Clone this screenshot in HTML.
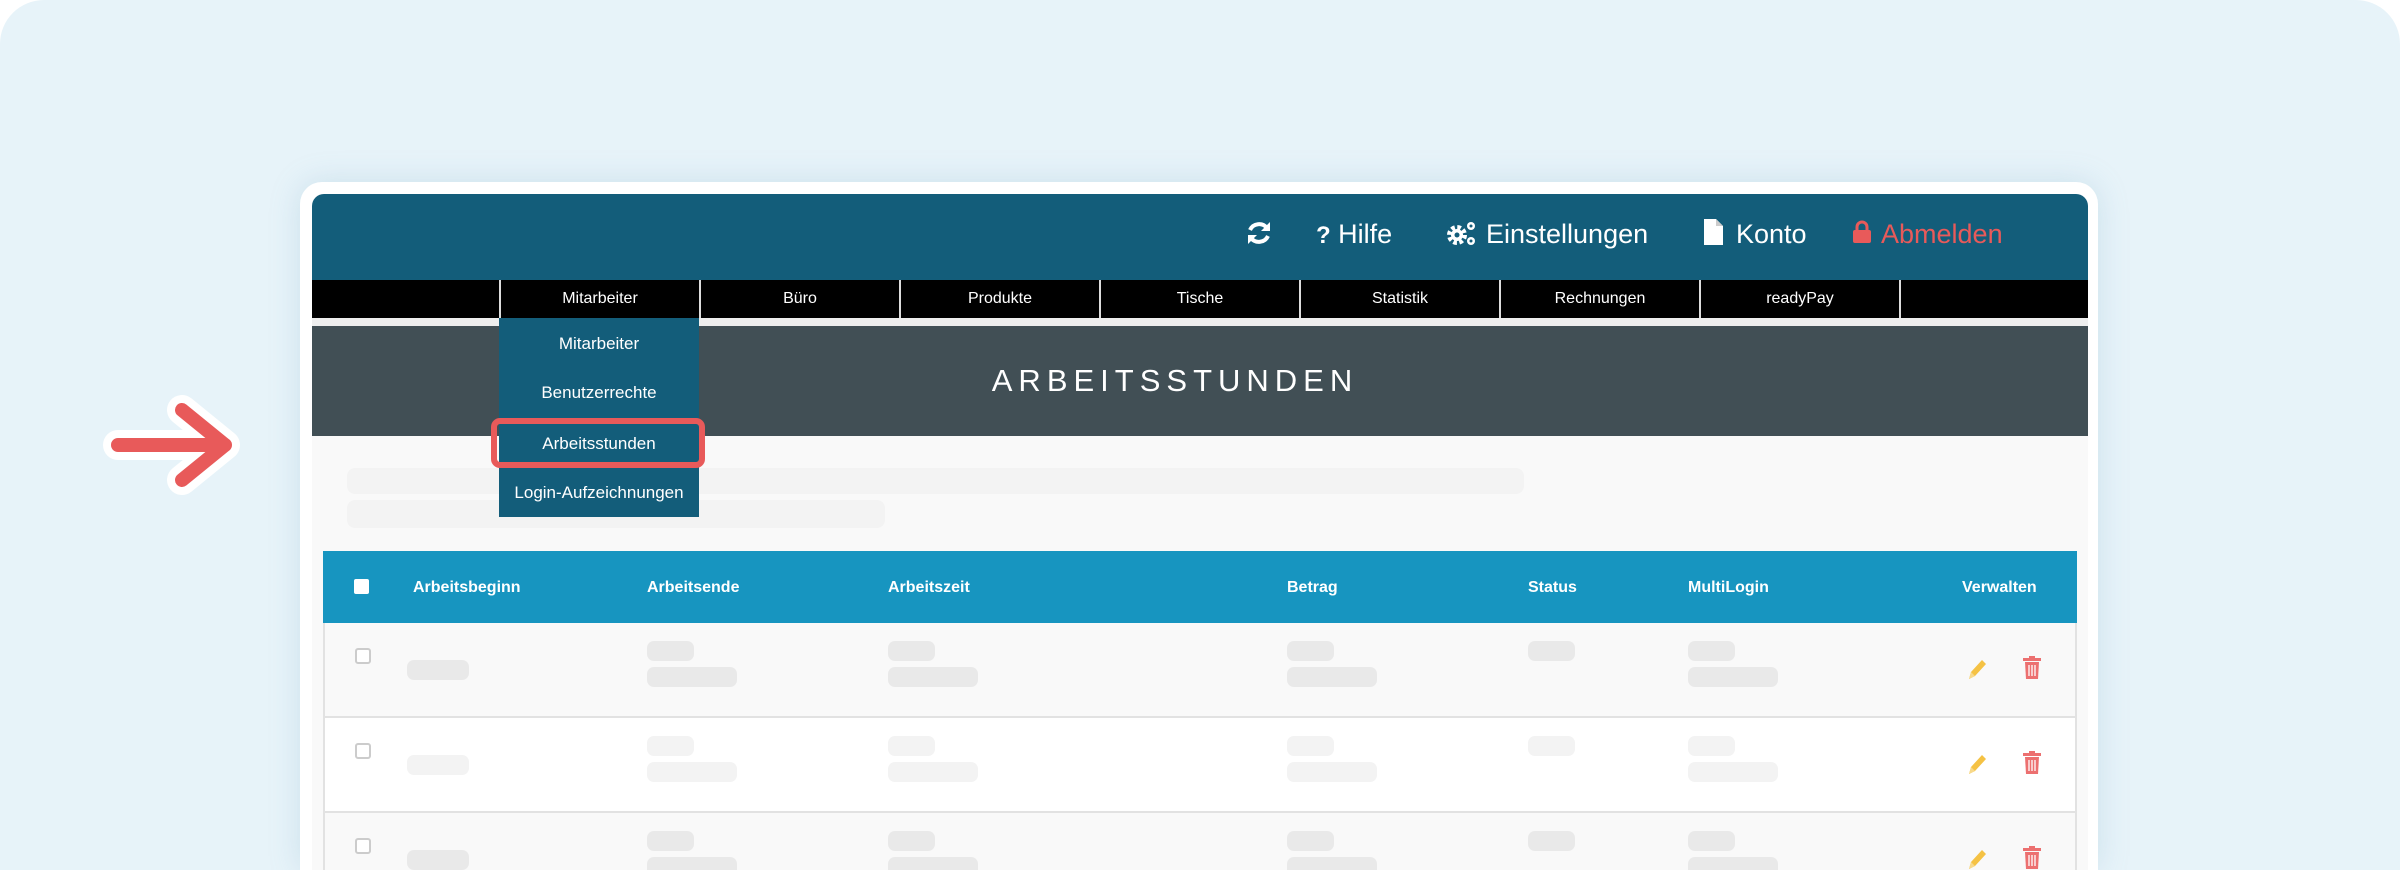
<!DOCTYPE html>
<html><head><meta charset="utf-8">
<style>
*{margin:0;padding:0;box-sizing:border-box}
html,body{width:2400px;height:870px;overflow:hidden}
body{background:#fff;font-family:"Liberation Sans",sans-serif;position:relative}
.bg{position:absolute;left:0;top:0;width:2400px;height:870px;background:#e7f3f9;border-radius:44px 44px 0 0}
.win{position:absolute;left:300px;top:182px;width:1798px;height:688px;background:#fff;border-radius:22px 22px 0 0;box-shadow:0 0 30px rgba(120,170,200,.25)}
.a{position:absolute}
.hdr{left:312px;top:194px;width:1776px;height:86px;background:#135d7a;border-radius:12px 12px 0 0}
.ht{position:absolute;top:216px;color:#fff;font-size:27px;line-height:36px}
.nav{left:312px;top:280px;width:1776px;height:38px;background:#000}
.nc{position:absolute;top:280px;height:38px;width:200px;border-left:2px solid #ddd;color:#fff;font-size:16px;line-height:38px;text-align:center}
.title{left:312px;top:326px;width:1776px;height:110px;background:#414f55;color:#fff;text-align:center;font-size:31px;line-height:110px;letter-spacing:6px;padding-right:50px}
.body{left:312px;top:318px;width:1776px;height:8px;background:#eee}
.main{left:312px;top:436px;width:1776px;height:440px;background:#f9f9f9}
.dd{left:499px;top:318px;width:200px;height:199px;background:#135d7a}
.di{position:absolute;left:499px;width:200px;text-align:center;color:#fff;font-size:17px;line-height:30px}
.sk{position:absolute;border-radius:8px}
.th{left:323px;top:551px;width:1754px;height:72px;background:#1795c0}
.hc{position:absolute;top:577px;color:#fff;font-weight:bold;font-size:16px;line-height:22px}
.row{position:absolute;left:323px;width:1754px;height:95px;border:2px solid #e2e2e2;border-top:none}
.p{position:absolute;border-radius:7px}
.cb{position:absolute;left:355px;width:16px;height:16px;border:2px solid #ccc;border-radius:3px;background:#fff}
</style></head><body>
<div class="bg"></div>
<div class="win"></div>
<svg class="a" style="left:100px;top:395px" width="145" height="105" viewBox="0 0 145 105">
<g stroke="#fff" stroke-width="30" stroke-linecap="round" stroke-linejoin="round" fill="none"><path d="M18 50H125M82 15l43 35-43 35"/></g>
<g stroke="#e85a5a" stroke-width="14" stroke-linecap="round" stroke-linejoin="round" fill="none"><path d="M18 50H125M82 15l43 35-43 35"/></g>
</svg>
<div class="a hdr"></div>
<svg class="a" style="left:1246px;top:219px" width="26" height="28" viewBox="0 0 26 28"><g fill="none" stroke="#fff" stroke-width="4"><path d="M21 9A10 10 0 0 0 4 11"/><path d="M5 19a10 10 0 0 0 17-2"/></g><path d="M24 3v9h-9z M2 25v-9h9z" fill="#fff"/></svg>
<div class="ht" style="left:1316px"><b style="font-size:24px">?</b> Hilfe</div>
<svg class="a" style="left:1445px;top:218px" width="34" height="30" viewBox="0 0 34 30"><circle cx="12" cy="17" r="7.5" fill="none" stroke="#fff" stroke-width="5" stroke-dasharray="3.5 2.4"/><circle cx="12" cy="17" r="6" fill="#fff"/><circle cx="12" cy="17" r="2.5" fill="#135d7a"/><circle cx="26" cy="8" r="4" fill="#fff"/><circle cx="26" cy="8" r="1.5" fill="#135d7a"/><circle cx="26" cy="23" r="4" fill="#fff"/><circle cx="26" cy="23" r="1.5" fill="#135d7a"/></svg>
<div class="ht" style="left:1486px">Einstellungen</div>
<svg class="a" style="left:1702px;top:218px" width="22" height="28" viewBox="0 0 22 28"><path d="M2 1h12l7 7v19H2z" fill="#fff"/><path d="M14 1v7h7" fill="#ccc"/></svg>
<div class="ht" style="left:1736px">Konto</div>
<svg class="a" style="left:1852px;top:220px" width="20" height="24" viewBox="0 0 20 24"><path d="M5 11V7a5 5 0 0 1 10 0v4" fill="none" stroke="#e85a5a" stroke-width="3"/><rect x="1" y="10" width="18" height="13" rx="2" fill="#e85a5a"/></svg>
<div class="ht" style="left:1881px;color:#e85a5a">Abmelden</div>
<div class="a nav"></div>
<div class="nc" style="left:499px">Mitarbeiter</div>
<div class="nc" style="left:699px">Büro</div>
<div class="nc" style="left:899px">Produkte</div>
<div class="nc" style="left:1099px">Tische</div>
<div class="nc" style="left:1299px">Statistik</div>
<div class="nc" style="left:1499px">Rechnungen</div>
<div class="nc" style="left:1699px">readyPay</div>
<div class="nc" style="left:1899px;width:2px"></div>
<div class="a body"></div>
<div class="a title">ARBEITSSTUNDEN</div>
<div class="a main"></div>
<div class="sk" style="left:347px;top:468px;width:1177px;height:26px;background:#f3f3f3"></div>
<div class="sk" style="left:347px;top:500px;width:538px;height:28px;background:#f3f3f3"></div>
<div class="a dd"></div>
<div class="di" style="top:329px">Mitarbeiter</div>
<div class="di" style="top:378px">Benutzerrechte</div>
<div class="di" style="top:429px">Arbeitsstunden</div>
<div class="di" style="top:478px">Login-Aufzeichnungen</div>
<div class="a" style="left:491px;top:418px;width:214px;height:50px;border:6px solid #e85a5a;border-radius:9px"></div>
<div class="a th"></div>
<div class="a" style="left:354px;top:579px;width:15px;height:15px;background:#fff;border-radius:2px"></div>
<div class="hc" style="left:413px">Arbeitsbeginn</div>
<div class="hc" style="left:647px">Arbeitsende</div>
<div class="hc" style="left:888px">Arbeitszeit</div>
<div class="hc" style="left:1287px">Betrag</div>
<div class="hc" style="left:1528px">Status</div>
<div class="hc" style="left:1688px">MultiLogin</div>
<div class="hc" style="left:1962px">Verwalten</div>

<div class="row" style="top:623px;background:#f9f9f9"></div>
<div class="row" style="top:718px;background:#fff"></div>
<div class="row" style="top:813px;background:#f9f9f9;height:70px;border-bottom:none"></div>

<div id="rows"></div>
<script>
var tops=[623,718,813],cols=["#e9e9e9","#f3f3f3","#e9e9e9"],h="";
tops.forEach(function(t,i){var c=cols[i];
h+='<div class="cb" style="top:'+(t+25)+'px"></div>';
h+='<div class="p" style="left:407px;top:'+(t+37)+'px;width:62px;height:20px;background:'+c+'"></div>';
[647,888,1287,1528,1688].forEach(function(x,j){
h+='<div class="p" style="left:'+x+'px;top:'+(t+18)+'px;width:47px;height:20px;background:'+c+'"></div>';
if(j!=3)h+='<div class="p" style="left:'+x+'px;top:'+(t+44)+'px;width:90px;height:20px;background:'+c+'"></div>';});
h+='<svg style="position:absolute;left:1966px;top:'+(t+34)+'px" width="22" height="24" viewBox="0 0 22 24"><path d="M3 22l2-7L16 3l4 4L9 19z" fill="#f5c244"/><path d="M3 22l2-7 4 4z" fill="#f8d98a"/></svg>';
h+='<svg style="position:absolute;left:2023px;top:'+(t+33)+'px" width="18" height="24" viewBox="0 0 18 24"><rect x="0" y="2" width="18" height="3" fill="#ec7070"/><rect x="6" y="0" width="6" height="3" fill="#ec7070"/><path d="M2 6h14l-1 17H3z" fill="#ec7070"/><path d="M6 9v11M9 9v11M12 9v11" stroke="#fff" stroke-width="1.3"/></svg>';});
document.getElementById("rows").innerHTML=h;
</script>
</body></html>
